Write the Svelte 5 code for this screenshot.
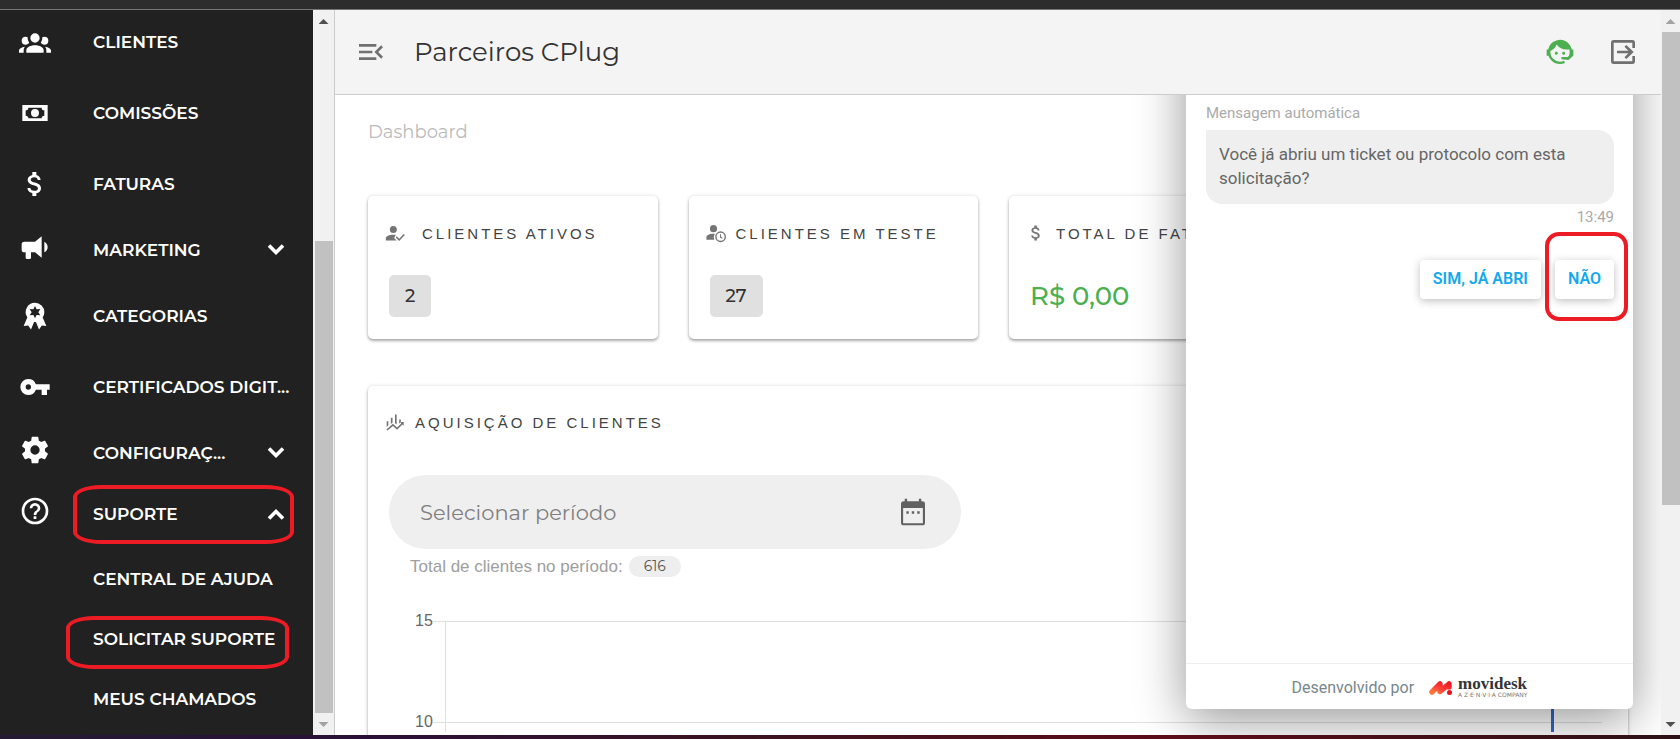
<script>
	const menu = [
		{ label: 'Clientes', icon: 'group', href: '#clientes' },
		{ label: 'Comissões', icon: 'cash', href: '#comissoes' },
		{ label: 'Faturas', icon: 'money', href: '#faturas' },
		{ label: 'Marketing', icon: 'horn', arrow: true },
		{ label: 'Categorias', icon: 'medal', href: '#categorias' },
		{ label: 'Certificados Digit...', icon: 'key', href: '#certificados' },
		{ label: 'Configuraç...', icon: 'gear', arrow: true },
		{ label: 'Suporte', icon: 'help', arrow: true, marked: true }
	];
	const support = [
		{ label: 'Central de Ajuda', href: '#ajuda' },
		{ label: 'Solicitar Suporte', href: '#solicitar', marked: true },
		{ label: 'Meus Chamados', href: '#chamados' }
	];

	const icons = {
		group:
			'M12 5.5A3.5 3.5 0 0 1 15.500 9A3.500 3.500 0 0 1 12 12.500A3.500 3.500 0 0 1 8.500 9A3.500 3.500 0 0 1 12 5.500M5 8c.56 0 1.080.15 1.530.42c-.15 1.430.27 2.850 1.130 3.960C7.160 13.340 6.160 14 5 14a3 3 0 0 1-3-3a3 3 0 0 1 3-3m14 0a3 3 0 0 1 3 3a3 3 0 0 1-3 3c-1.160 0-2.160-.66-2.660-1.620a5.540 5.540 0 0 0 1.130-3.960c.45-.27.97-.42 1.530-.42M5.500 18.250c0-2.070 2.910-3.750 6.500-3.750s6.500 1.680 6.500 3.750V20h-13zM0 20v-1.500c0-1.390 1.890-2.560 4.450-2.900c-.59.68-.95 1.620-.95 2.650V20zm24 0h-3.500v-1.750c0-1.030-.36-1.970-.95-2.650c2.560.34 4.450 1.510 4.450 2.900z',
		cash: 'M2.500 6h19v12h-19zM7 8a2 2 0 0 1-2 2v4a2 2 0 0 1 2 2h10a2 2 0 0 1 2-2v-4a2 2 0 0 1-2-2zM12 9a3 3 0 1 1 0 6a3 3 0 0 1 0-6',
		money:
			'M11.800 10.900c-2.270-.59-3-1.200-3-2.150c0-1.090 1.010-1.850 2.700-1.850c1.780 0 2.440.85 2.500 2.100h2.210c-.07-1.720-1.120-3.300-3.210-3.810V3h-3v2.160c-1.940.42-3.500 1.680-3.500 3.610c0 2.310 1.910 3.460 4.700 4.130c2.500.6 3 1.480 3 2.410c0 .69-.49 1.790-2.700 1.790c-2.060 0-2.870-.92-2.980-2.100h-2.200c.12 2.190 1.760 3.420 3.680 3.830V21h3v-2.150c1.950-.37 3.500-1.500 3.500-3.550c0-2.840-2.430-3.810-4.700-4.400',
		horn: 'M12 8H4a2 2 0 0 0-2 2v4a2 2 0 0 0 2 2h1v4a1 1 0 0 0 1 1h2a1 1 0 0 0 1-1v-4h3l5 4V4zm9.500 4c0 1.710-.96 3.260-2.500 4V8c1.530.75 2.500 2.300 2.500 4',
		medal:
			'M12 2a7 7 0 0 1 7 7c0 1.700-.5 2.900-1.300 4L20.500 19.500l-3.400-.4L15 22.200L12.700 16.500h-1.400L9 22.200L6.900 19.100l-3.400.4L6.300 13A7 7 0 0 1 12 2m0 2.500l-1.200 2.400l-2.800-.1l1.500 2.300L8 11.400l2.800-.1L12 13.700l1.200-2.400l2.800.1l-1.500-2.300L16 6.800l-2.800.1z',
		key: 'M7 14a2 2 0 0 1-2-2a2 2 0 0 1 2-2a2 2 0 0 1 2 2a2 2 0 0 1-2 2m5.650-4A5.990 5.990 0 0 0 7 6a6 6 0 0 0-6 6a6 6 0 0 0 6 6a5.990 5.990 0 0 0 5.650-4H17v4h4v-4h2v-4z',
		gear: 'M12 15.500A3.500 3.500 0 0 1 8.500 12A3.500 3.500 0 0 1 12 8.500a3.500 3.500 0 0 1 3.500 3.500a3.500 3.500 0 0 1-3.500 3.500m7.430-2.530c.04-.32.07-.64.07-.97s-.03-.66-.07-1l2.110-1.630c.19-.15.24-.42.12-.64l-2-3.460c-.12-.22-.39-.31-.61-.22l-2.490 1c-.52-.39-1.060-.73-1.690-.98l-.37-2.650A.506.506 0 0 0 14 2h-4c-.25 0-.46.18-.5.42l-.37 2.650c-.63.25-1.170.59-1.690.98l-2.490-1c-.22-.09-.49 0-.61.22l-2 3.460c-.13.22-.07.49.12.64L4.570 11c-.04.34-.07.67-.07 1s.03.65.07.97l-2.110 1.660c-.19.15-.25.42-.12.64l2 3.460c.12.22.39.3.61.22l2.490-1.010c.52.4 1.060.74 1.690.99l.37 2.650c.04.24.25.42.5.42h4c.25 0 .46-.18.5-.42l.37-2.650c.63-.26 1.170-.59 1.690-.99l2.490 1.010c.22.08.49 0 .61-.22l2-3.460c.12-.22.07-.49-.12-.64z',
		help: 'M11 18h2v-2h-2zm1-16A10 10 0 0 0 2 12a10 10 0 0 0 10 10a10 10 0 0 0 10-10A10 10 0 0 0 12 2m0 18c-4.410 0-8-3.590-8-8s3.590-8 8-8s8 3.590 8 8s-3.590 8-8 8m0-14a4 4 0 0 0-4 4h2a2 2 0 0 1 2-2a2 2 0 0 1 2 2c0 2-3 1.750-3 5h2c0-2.250 3-2.500 3-5a4 4 0 0 0-4-4',
		down: 'M7.700 7.700L12 12l4.300-4.300L18.200 9.600L12 15.800L5.800 9.600z',
		up: 'M7.700 16.300L12 12l4.300 4.300l1.900-1.900L12 8.200l-6.200 6.200z',
		collapse: 'M3 6h13v2H3zm0 5h10v2H3zm0 5h13v2H3zM21 8.400L17.400 12l3.600 3.600L19.600 17l-5-5l5-5z',
		exit: 'M19 3H5a2 2 0 0 0-2 2v14a2 2 0 0 0 2 2h14a2 2 0 0 0 2-2v-4h-2v4H5V5h14v4h2V5a2 2 0 0 0-2-2m-4.500 3.700l-1.400 1.400l2.900 2.900H7.500v2H16l-2.900 2.900l1.400 1.400L20 12z',
		agent:
			'M18.720 14.760c.35-.85.54-1.760.54-2.760c0-.72-.11-1.410-.3-2.050c-.65.15-1.330.23-2.040.23A9.070 9.070 0 0 1 9.500 6.340a9.210 9.210 0 0 1-4.730 4.880c-.04.25-.04.52-.04.78A7.270 7.270 0 0 0 12 19.270c1.050 0 2.060-.23 2.970-.64c.57 1.090.83 1.630.81 1.630c-1.640.55-2.910.82-3.780.82c-2.420 0-4.730-.95-6.430-2.660a9.030 9.030 0 0 1-2.240-3.690H2v-4.550h1.090a9.090 9.090 0 0 1 15.330-4.600a8.990 8.990 0 0 1 2.470 4.600H22v4.550h-.06L18.380 18l-5.300-.6v-1.670h4.830zm-9.450-2.990c.3 0 .59.12.8.34a1.136 1.136 0 0 1 0 1.600c-.21.21-.5.33-.8.33c-.63 0-1.140-.5-1.140-1.130s.51-1.140 1.140-1.140m5.450 0c.63 0 1.130.51 1.130 1.140s-.5 1.130-1.130 1.130s-1.140-.5-1.140-1.130a1.140 1.140 0 0 1 1.140-1.140',
		userCheck:
			'M10 3.500a4.200 4.200 0 1 1 0 8.400a4.200 4.200 0 0 1 0-8.400m3 10.700c-6-.8-12 .8-12 4V21h13l-3-3zM23.800 14.500L17 21.500l-4.200-4.200l1.300-1.300L17 18.800l5.400-5.600z',
		userClock:
			'M9 2.500a4.300 4.300 0 1 1 0 8.600a4.300 4.300 0 0 1 0-8.600m1.500 10.500C5 12.500 .5 14.500 .5 17v3h9.500a8 8 0 0 1 .5-7M17.500 10a6.500 6.500 0 1 1 0 13a6.500 6.500 0 0 1 0-13m0 1.700a4.800 4.800 0 1 0 0 9.600a4.800 4.800 0 0 0 0-9.600m-.7 1.800H18v3l2 1.300l-.7 1.100l-2.500-1.600z',
		chart: 'M2 11h2v5l-2 2zM7 7h2v6l-2 1.500zM12 3h2v12l-2-1.500zM17 9h2v3l-2 2zM22.500 12v4.500l-1.600-1.600l-6.400 6.300l-5-4.500l-6.500 5.600l-1.300-1.300l7.800-6.800l5 4.500l5-5L18 12z',
		calendar:
			'M7 11.500h1.800v1.800H7zm4.100 0h1.800v1.800h-1.800zm4.100 0H17v1.800h-1.800zM19 4h-.8V2h-1.800v2H7.600V2H5.800v2H5a2 2 0 0 0-2 2v14a2 2 0 0 0 2 2h14a2 2 0 0 0 2-2V6a2 2 0 0 0-2-2m.4 16.400H4.600V9h14.800z'
	};

	const stats = [
		{ title: 'Clientes ativos', icon: 'userCheck', value: '2' },
		{ title: 'Clientes em teste', icon: 'userClock', value: '27' },
		{ title: 'Total de faturas', icon: 'money', money: 'R$ 0,00' },
		{ title: 'Comissões', icon: 'money', money: 'R$ 0,00' }
	];

	let supportOpen = true;
	let period = '';
</script>

{#snippet icon(name)}
	<svg class="icon" viewBox="0 0 24 24" aria-hidden="true">
		<path d={icons[name]} fill-rule="evenodd" />
	</svg>
{/snippet}

<div class="screen">
	<div class="topbar"></div>

	<div class="body">
		<nav class="sidebar">
			<ul class="menu">
				{#each menu as item}
					<li class="row" class:short={item.arrow}>
						{#if item.arrow}
							<button
								class="link"
								on:click={() => {
									if (item.marked) supportOpen = !supportOpen;
								}}
							>
								{@render icon(item.icon)}
								<span class="label">{item.label}</span>
								<span class="arrow">{@render icon(item.marked && supportOpen ? 'up' : 'down')}</span>
							</button>
						{:else}
							<a class="link" href={item.href}>
								{@render icon(item.icon)}
								<span class="label">{item.label}</span>
							</a>
						{/if}
						{#if item.marked}<span class="mark mark-parent"></span>{/if}
					</li>
				{/each}
			</ul>
			{#if supportOpen}
				<ul class="submenu">
					{#each support as item}
						<li class="subrow">
							<a class="sublink" href={item.href}>{item.label}</a>
							{#if item.marked}<span class="mark mark-child"></span>{/if}
						</li>
					{/each}
				</ul>
			{/if}
		</nav>
		<div class="scroll scroll-menu">
			<span class="tri up dark"></span>
			<span class="gap-menu"></span>
			<span class="thumb thumb-menu"></span>
			<span class="tri down"></span>
		</div>

		<main>
			<header>
				<button class="tool" aria-label="Recolher menu">{@render icon('collapse')}</button>
				<h1>Parceiros CPlug</h1>
				<button class="tool agent" aria-label="Suporte">{@render icon('agent')}</button>
				<button class="tool" aria-label="Sair">{@render icon('exit')}</button>
			</header>

			<div class="content">
				<h2>Dashboard</h2>
				<div class="stats">
					{#each stats as stat}
						<section class="card stat">
							<h3 class:wide={stat.icon === 'userCheck'}>
								{@render icon(stat.icon)}<span>{stat.title}</span>
							</h3>
							{#if stat.money}
								<p class="money">{stat.money}</p>
							{:else}
								<span class="chip">{stat.value}</span>
							{/if}
						</section>
					{/each}
				</div>

				<section class="card chart-card">
					<h3>{@render icon('chart')}<span>Aquisição de clientes</span></h3>
					<label class="field">
						<input type="text" placeholder="Selecionar período" aria-label="Selecionar período" bind:value={period} />
						{@render icon('calendar')}
					</label>
					<p class="total">Total de clientes no período: <span class="pill">616</span></p>
					<div class="chart">
						<div class="tick"><span>15</span></div>
						<div class="tick"><span>10</span></div>
						<div class="axis"></div>
						<div class="bar"></div>
					</div>
				</section>

				<aside class="chat">
					<div class="messages">
						<p class="author">Mensagem automática</p>
						<p class="bubble">Você já abriu um ticket ou protocolo com esta solicitação?</p>
						<time>13:49</time>
						<div class="answers">
							<button>SIM, JÁ ABRI</button>
							<button>NÃO<span class="mark mark-answer"></span></button>
						</div>
					</div>
					<footer>
						<span>Desenvolvido por</span>
						<a class="brand" href="#movidesk">
							<svg viewBox="0 0 46 28" aria-hidden="true">
								<defs>
									<linearGradient id="flame" x1="0" y1="1" x2="1" y2="0">
										<stop offset="0" stop-color="#ff7a3c" />
										<stop offset="0.5" stop-color="#fb3a36" />
										<stop offset="1" stop-color="#ee1c25" />
									</linearGradient>
								</defs>
								<path d="M6 22L22 6V21L40 6V12" fill="none" stroke="url(#flame)" stroke-width="11" stroke-linejoin="round" stroke-linecap="round" />
								<circle cx="41" cy="23" r="5" fill="#e8121c" />
							</svg>
							<span class="brand-text">
								<b>movidesk</b>
								<small>A Z·E·N·V·I·A COMPANY</small>
							</span>
						</a>
					</footer>
				</aside>
			</div>
		</main>
		<div class="scroll scroll-page">
			<span class="tri up"></span>
			<span class="thumb thumb-page"></span>
			<span class="rest"></span>
			<span class="tri down dark"></span>
		</div>
	</div>

	<div class="taskbar"></div>
</div>

<style>
	:global(body) {
		margin: 0;
	}
	* {
		box-sizing: border-box;
		margin: 0;
		padding: 0;
	}
	.screen {
		display: flex;
		flex-direction: column;
		height: 100vh;
		overflow: hidden;
		font-family: Montserrat, Inter, sans-serif;
		color: #333;
		background: #fff;
	}
	button {
		font: inherit;
		color: inherit;
		background: none;
		border: 0;
		cursor: pointer;
	}
	a {
		color: inherit;
		text-decoration: none;
	}
	ul {
		list-style: none;
	}
	.icon {
		flex: none;
		width: 32px;
		height: 32px;
		fill: currentColor;
	}
	.topbar {
		flex: none;
		height: 10px;
		background: #2d2d2d;
		border-bottom: 1px solid #777;
	}
	.taskbar {
		flex: none;
		height: 4px;
		background: linear-gradient(to right, #241b33, #2a1038 22%, #3c1420 45%, #5c0c18 70%, #2b1216);
	}
	.body {
		flex: 1;
		min-height: 0;
		display: flex;
	}

	/* sidebar */
	.sidebar {
		flex: none;
		width: 313px;
		overflow: hidden;
		background: #212121;
		color: #fff;
		font-size: 17px;
		font-weight: 600;
		text-transform: uppercase;
	}
	.menu {
		margin-top: -4px;
	}
	.row {
		position: relative;
		height: 71px;
	}
	.row.short {
		height: 61px;
	}
	.subrow {
		position: relative;
		height: 60px;
	}
	.link {
		display: flex;
		align-items: center;
		width: 100%;
		height: 100%;
		padding: 0 20px 0 19px;
		text-align: left;
		text-transform: inherit;
	}
	.short .link > :global(.icon) {
		margin-bottom: 6px;
	}
	.label {
		flex: 1;
		margin-left: 42px;
		white-space: nowrap;
	}
	.arrow {
		display: flex;
		margin-right: 1px;
	}
	.submenu {
		padding-top: 5px;
	}
	.sublink {
		display: flex;
		align-items: center;
		height: 100%;
		padding-left: 93px;
		white-space: nowrap;
	}
	.mark {
		position: absolute;
		border: 4px solid #ed1c24;
		pointer-events: none;
	}
	.mark-parent {
		inset: 2px 19px 0 73px;
		border-radius: 28px / 12px;
	}
	.mark-child {
		inset: 7px 24px 0 66px;
		border-radius: 28px / 12px;
	}

	/* scrollbars */
	.scroll {
		flex: none;
		display: flex;
		flex-direction: column;
		align-items: center;
		background: #f1f1f1;
	}
	.scroll-menu {
		width: 22px;
		border-right: 1px solid #ccc;
	}
	.scroll-page {
		width: 19px;
	}
	.tri {
		flex: none;
		width: 10px;
		height: 5px;
		margin: 9px 0 8px;
		background: #a3a3a3;
	}
	.tri.dark {
		background: #505050;
	}
	.up {
		clip-path: polygon(50% 0, 100% 100%, 0 100%);
	}
	.down {
		clip-path: polygon(0 0, 100% 0, 50% 100%);
	}
	.thumb {
		width: 18px;
		background: #c1c1c1;
	}
	.gap-menu {
		flex: 209;
	}
	.thumb-menu {
		flex: 472;
	}
	.thumb-page {
		flex: 473;
	}
	.rest {
		flex: 208;
	}

	/* page */
	main {
		flex: 1;
		min-width: 0;
		display: flex;
		flex-direction: column;
	}
	header {
		position: relative;
		z-index: 2;
		flex: none;
		display: flex;
		align-items: center;
		height: 85px;
		padding: 0 22px 0 20px;
		background: #f4f4f4;
		border-bottom: 1px solid #ccc;
	}
	h1 {
		flex: 1;
		margin-left: 27px;
		font-size: 26px;
		font-weight: 400;
		color: #333;
	}
	.tool {
		display: flex;
		color: #707070;
	}
	.agent {
		margin-right: 31px;
		color: #4caf50;
	}
	.content {
		position: relative;
		flex: 1;
		min-height: 0;
		overflow: hidden;
		padding: 23px 33px 0;
	}
	h2 {
		font-size: 18px;
		line-height: 28px;
		font-weight: 400;
		color: #bbb;
	}
	.stats {
		display: grid;
		grid-template-columns: repeat(4, 1fr);
		gap: 31px;
		margin: 50px 9px 47px 0;
	}
	.card {
		background: #fff;
		border-radius: 5px;
		box-shadow: 0 2px 3px rgba(0, 0, 0, 0.3), 0 0 4px rgba(0, 0, 0, 0.12);
	}
	.stat {
		height: 143px;
		padding: 26px 0 0 17px;
	}
	h3 {
		display: flex;
		align-items: center;
		gap: 10px;
		height: 22px;
		font: 400 15px 'Liberation Sans', Arial, sans-serif;
		letter-spacing: 3px;
		text-transform: uppercase;
		white-space: nowrap;
		color: #444;
	}
	h3.wide {
		gap: 17px;
	}
	h3 :global(.icon) {
		width: 20px;
		height: 20px;
		color: #757575;
	}
	.chip {
		display: inline-flex;
		align-items: center;
		height: 42px;
		margin: 31px 0 0 4px;
		padding: 0 16px;
		border-radius: 5px;
		background: #e0e0e0;
		font-size: 18px;
		font-weight: 500;
	}
	.money {
		margin: 35px 0 0 4px;
		font-size: 26px;
		font-weight: 500;
		line-height: 34px;
		color: #4caf50;
	}
	.chart-card {
		height: 600px;
		padding: 25px 26px 0 17px;
	}
	.field {
		display: flex;
		align-items: center;
		width: 572px;
		height: 74px;
		margin: 42px 0 0 4px;
		padding: 0 32px 0 31px;
		border-radius: 37px;
		background: #efefef;
		color: #616161;
	}
	.field input {
		flex: 1;
		font: 400 21px Montserrat, Inter, sans-serif;
		border: 0;
		outline: 0;
		background: none;
		color: inherit;
	}
	.field input::placeholder {
		color: #808080;
		opacity: 1;
	}
	.total {
		display: flex;
		align-items: center;
		gap: 6px;
		margin: 7px 0 0 25px;
		font: 17px/21px 'Liberation Sans', Arial, sans-serif;
		color: #9e9e9e;
	}
	.pill {
		height: 21px;
		padding: 0 15px;
		border-radius: 11px;
		background: #eee;
		font: 14px/21px Montserrat, Inter, sans-serif;
		color: #555;
	}
	.chart {
		position: relative;
		margin: 34px 0 0 30px;
		font: 16px/20px 'Liberation Sans', Arial, sans-serif;
		color: #666;
	}
	.tick {
		display: flex;
		align-items: center;
		height: 20px;
		margin-bottom: 81px;
	}
	.tick::after {
		content: '';
		flex: 1;
		height: 1px;
		background: #e0e0e0;
	}
	.axis {
		position: absolute;
		top: 10px;
		bottom: 0;
		left: 30px;
		width: 1px;
		background: #e0e0e0;
	}
	.bar {
		position: absolute;
		top: 60px;
		bottom: 0;
		right: 48px;
		width: 3px;
		background: #3366cc;
	}

	/* chat window lies over the dashboard, its top is hidden by the header */
	.chat {
		position: absolute;
		top: -80px;
		right: 28px;
		bottom: 26px;
		width: 447px;
		display: flex;
		flex-direction: column;
		border-radius: 6px;
		background: #fff;
		box-shadow: 0 10px 50px rgba(0, 0, 0, 0.42);
		font-family: Roboto, sans-serif;
	}
	.messages {
		flex: 1;
		padding: 88px 19px 0 20px;
	}
	.author,
	time {
		display: block;
		font-size: 15px;
		line-height: 20px;
		color: #aaa;
	}
	.bubble {
		margin: 7px 0 3px;
		padding: 12px 13px 14px;
		border-radius: 0 16px 16px 16px;
		background: #efefef;
		font-size: 17px;
		line-height: 24px;
		color: #666;
	}
	time {
		text-align: right;
	}
	.answers {
		display: flex;
		justify-content: flex-end;
		gap: 14px;
		margin-top: 33px;
	}
	.answers button {
		position: relative;
		height: 39px;
		padding: 0 13px 2px;
		border-radius: 4px;
		background: #fff;
		box-shadow: 0 2px 8px rgba(0, 0, 0, 0.25);
		font-size: 16px;
		font-weight: 600;
		color: #12a8ee;
	}
	.mark-answer {
		inset: -28px -14px -22px -10px;
		border-radius: 14px;
	}
	footer {
		display: flex;
		align-items: center;
		justify-content: center;
		gap: 15px;
		height: 46px;
		padding-top: 2px;
		border-top: 1px solid #eee;
		font-size: 16px;
		color: #78878c;
	}
	.brand {
		display: flex;
		align-items: center;
		gap: 6px;
		color: #333;
	}
	.brand svg {
		width: 23px;
		height: 14px;
	}
	.brand-text {
		display: flex;
		flex-direction: column;
	}
	.brand b {
		font: 700 17px/14px 'Liberation Serif', serif;
	}
	.brand small {
		font: 6px/8px 'DejaVu Sans', sans-serif;
		color: #777;
	}
</style>
